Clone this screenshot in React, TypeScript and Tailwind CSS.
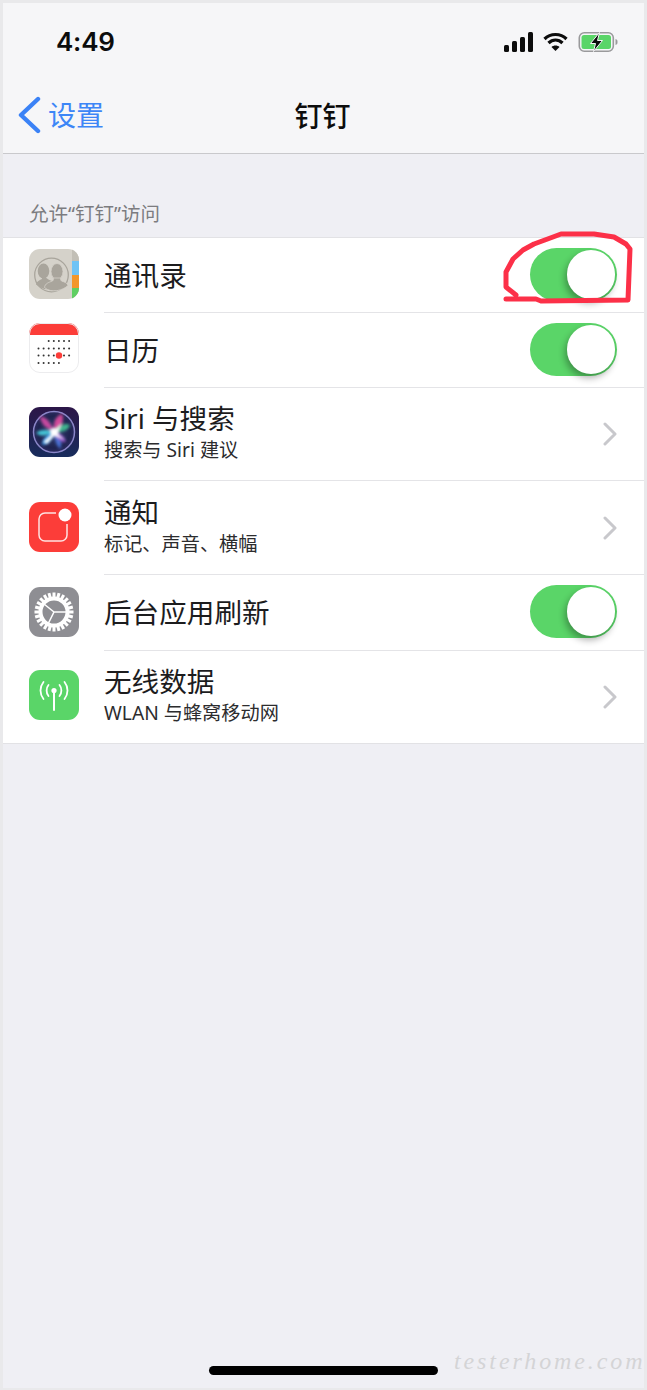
import { ReactNode } from 'react'

const cjk = { fontFamily: '"Noto Sans", "Noto Sans CJK SC", sans-serif' }

function Toggle() {
  return (
    <div className="relative w-[87px] h-[53px] mb-[2px] rounded-full bg-[#5ad568] shrink-0">
      <div className="absolute right-[2px] top-[2px] w-[48px] h-[49px] rounded-full bg-white shadow-[-2px_4px_7px_rgba(0,0,0,0.32)]" />
    </div>
  )
}

function Chevron() {
  return (
    <svg width="14" height="24" viewBox="0 0 14 24" fill="none" className="shrink-0">
      <path d="M2 2l10 10L2 22" stroke="#c8c8cc" strokeWidth="3" strokeLinecap="round" strokeLinejoin="round" />
    </svg>
  )
}

function ContactsIcon() {
  return (
    <svg width="50" height="50" viewBox="0 0 50 50">
      <defs>
        <clipPath id="c1"><rect width="50" height="50" rx="11" /></clipPath>
      </defs>
      <g clipPath="url(#c1)">
        <rect width="50" height="50" fill="#d5d2ca" />
        <rect x="43" width="7" height="50" fill="#c2bfb6" />
        <rect x="43" y="12" width="7" height="14" fill="#6fc3f5" />
        <rect x="43" y="26" width="7" height="13" fill="#f3962a" />
        <rect x="43" y="39" width="7" height="11" fill="#5fcf62" />
        <circle cx="22.500" cy="26" r="16.800" fill="none" stroke="#a9a59c" strokeWidth="1.300" />
        <ellipse cx="14.500" cy="22" rx="5.800" ry="7.500" fill="#a9a59c" />
        <path d="M7 35.500c.5-3 3-4 6-5.500 0-2 0-2 1-2h2c2 1 3 3 7 4l-3 8c-4 1-8-1-13-4.500z" fill="#a9a59c" />
        <ellipse cx="28" cy="22.500" rx="6" ry="8" fill="#a9a59c" stroke="#d5d2ca" strokeWidth="0.800" />
        <path d="M15.500 38.500c.5-4 4-5 8-6.500 1-1 1-2 1-3h7c0 1 0 2 1 3 3 1 6 2 6.500 4.500-5 5-17 8-23.500 2z" fill="#a9a59c" stroke="#d5d2ca" strokeWidth="0.800" />
      </g>
    </svg>
  )
}

function CalendarIcon() {
  const rows = [
    { y: 18, from: 3, to: 7 },
    { y: 25.5, from: 1, to: 7 },
    { y: 32.5, from: 1, to: 7 },
    { y: 40, from: 1, to: 5 },
  ]
  return (
    <svg width="50" height="50" viewBox="0 0 50 50">
      <defs>
        <clipPath id="c2"><rect width="50" height="50" rx="11" /></clipPath>
      </defs>
      <g clipPath="url(#c2)">
        <rect width="50" height="50" fill="#ffffff" />
        <rect width="50" height="12" fill="#fc3d39" />
        {rows.map((r) =>
          Array.from({ length: r.to - r.from + 1 }).map((_, i) => (
            <circle key={`${r.y}-${i}`} cx={9.5 + (r.from - 1 + i) * 5.1} cy={r.y} r="1" fill="#333" />
          )),
        )}
        <circle cx="30" cy="32.5" r="3.2" fill="#fc3d39" />
      </g>
      <rect x="0.5" y="0.5" width="49" height="49" rx="10.5" fill="none" stroke="#ececee" />
    </svg>
  )
}

function SiriIcon() {
  return (
    <svg width="50" height="50" viewBox="0 0 50 50">
      <defs>
        <clipPath id="c3"><rect width="50" height="50" rx="11" /></clipPath>
        <linearGradient id="sbg" x1="0" y1="0" x2="0" y2="1">
          <stop offset="0" stopColor="#2c1648" />
          <stop offset="1" stopColor="#182c5c" />
        </linearGradient>
        <radialGradient id="sglow">
          <stop offset="0" stopColor="#33406f" />
          <stop offset="0.8" stopColor="#1f2350" />
          <stop offset="1" stopColor="#2a2a5e" />
        </radialGradient>
        <filter id="sblur" x="-20%" y="-20%" width="140%" height="140%">
          <feGaussianBlur stdDeviation="1.500" />
        </filter>
      </defs>
      <g clipPath="url(#c3)">
        <rect width="50" height="50" fill="url(#sbg)" />
        <circle cx="25" cy="25" r="20" fill="url(#sglow)" />
        <circle cx="25" cy="25" r="20.5" fill="none" stroke="#8a86c8" strokeWidth="1.500" />
        <g filter="url(#sblur)">
          <path d="M25 24C21 14 16 9 11 10c1 7 6 12 14 14z" fill="#c5499f" />
          <path d="M25 24c-1-8 1-15 8-17 3 7-1 13-8 17z" fill="#d24a9a" />
          <path d="M25 24c7-7 12-8 16-6-2 6-8 8-16 6z" fill="#3fb58e" />
          <path d="M25 24C16 22 10 23 7 26c4 4 11 3 18-2z" fill="#45c8d8" />
          <path d="M25 24c-7 3-12 9-12 14 6 0 10-6 12-14z" fill="#2f8fe0" />
          <path d="M25 24c0 7 2 14 6 18 3-6 0-13-6-18z" fill="#4a72d8" />
          <path d="M25 24c6 2 11 6 12 11-6 1-10-4-12-11z" fill="#8a4cc0" />
        </g>
        <g filter="url(#sblur)">
          <path d="M14 35L25 25l8-10-4 12 7 6-11-4-7 8z" fill="#ffffff" />
          <circle cx="25" cy="25" r="4" fill="#ffffff" />
        </g>
      </g>
    </svg>
  )
}

function NotificationIcon() {
  return (
    <svg width="50" height="50" viewBox="0 0 50 50">
      <rect width="50" height="50" rx="11" fill="#fc3d39" />
      <path d="M27 11H16a6 6 0 0 0-6 6v16a6 6 0 0 0 6 6h16a6 6 0 0 0 6-6V22" fill="none" stroke="#fff" strokeOpacity="0.85" strokeWidth="1.500" />
      <circle cx="36" cy="13" r="6.500" fill="#fff" />
    </svg>
  )
}

function GearIcon() {
  const teeth = Array.from({ length: 24 })
  return (
    <svg width="50" height="50" viewBox="0 0 50 50">
      <rect width="50" height="50" rx="11" fill="#8e8e93" />
      {teeth.map((_, i) => (
        <rect key={i} x="23.500" y="5.500" width="3" height="6" fill="#fff" transform={`rotate(${i * 15} 25 25)`} />
      ))}
      <circle cx="25" cy="25" r="13.500" fill="none" stroke="#fff" strokeWidth="4" />
      <path d="M25 25L38 25M25 25L15 17M25 25L19 37" stroke="#fff" strokeWidth="1.600" />
    </svg>
  )
}

function CellularIcon() {
  return (
    <svg width="50" height="50" viewBox="0 0 50 50" fill="none">
      <rect width="50" height="50" rx="11" fill="#5ad568" />
      <g stroke="#fff" strokeWidth="1.800" strokeLinecap="round">
        <path d="M25 21v19" strokeWidth="2" />
        <path d="M19.500 15c-2.500 3-2.500 8 0 11" />
        <path d="M30.500 15c2.500 3 2.500 8 0 11" />
        <path d="M14.500 12c-4 5-4 12 0 17" />
        <path d="M35.500 12c4 5 4 12 0 17" />
      </g>
      <circle cx="25" cy="20.500" r="2.600" fill="#fff" />
    </svg>
  )
}

function Row(props: { icon: ReactNode; title: string; sub?: string; right: ReactNode; h: string; iconClass: string; last?: boolean }) {
  return (
    <div className={`flex items-center pl-[26px] ${props.h}`}>
      <div className={`w-[50px] h-[50px] shrink-0 ${props.iconClass}`}>{props.icon}</div>
      <div
        className={`ml-[25px] flex-1 self-stretch flex items-center justify-between pr-[27px] ${
          props.last ? '' : 'border-b border-[#e4e4e7]'
        }`}
      >
        <div className={props.sub ? 'pb-[6px]' : 'pb-[1px]'}>
          <div className="text-[27.600px] leading-[36px] text-[#1c1c1e]">{props.title}</div>
          {props.sub && <div className="mt-[2px] text-[19.200px] leading-[24px] text-[#2c2c2e]">{props.sub}</div>}
        </div>
        {props.right}
      </div>
    </div>
  )
}

export default function App() {
  return (
    <div className="w-[647px] h-[1390px] bg-[#e9e9eb] pt-[3px] px-[3px] pb-[2px]" style={cjk}>
      <div className="relative h-full bg-[#efeff4] flex flex-col overflow-hidden">
        <div className="h-[151px] bg-[#f6f6f8] border-b border-[#c9c9cc] flex flex-col shrink-0">
          <div className="flex items-center justify-between h-[78px] pl-[53px] pr-[25px]">
            <div className="text-[26px] font-semibold text-[#0c0c0c] -mt-[2px] tracking-[-0.2px]" style={{ fontFamily: 'Inter, sans-serif' }}>
              4:49
            </div>
            <div className="flex items-center gap-[9px]">
              <svg width="29" height="20" viewBox="0 0 29 20" fill="#0c0c0c">
                <rect x="0" y="13" width="5" height="7" rx="1.500" />
                <rect x="8" y="9" width="5" height="11" rx="1.500" />
                <rect x="16" y="5" width="5" height="15" rx="1.500" />
                <rect x="24" y="0" width="5" height="20" rx="1.500" />
              </svg>
              <svg width="27" height="20" viewBox="0 0 24 20" fill="none" stroke="#0c0c0c" strokeWidth="3.200">
                <path d="M1 7c6-6 16-6 22 0" />
                <path d="M5 11c4-4 10-4 14 0" />
                <path d="M12 19l-4-4c2-2 6-2 8 0z" fill="#0c0c0c" stroke="none" />
              </svg>
              <svg width="41" height="20" viewBox="0 0 40 20" fill="none">
                <rect x="0.800" y="0.800" width="34" height="18.400" rx="5" stroke="#9a9a9c" strokeWidth="1.600" />
                <rect x="3" y="3" width="29.500" height="14" rx="2.500" fill="#5ad568" />
                <path d="M37 7c1.600.5 2 1.200 2 3s-.4 2.500-2 3z" fill="#9a9a9c" />
                <path d="M21 0.500L12 11.500h5l-2 8 9-11h-5z" fill="#0c0c0c" stroke="#f6f6f8" strokeWidth="1" />
              </svg>
            </div>
          </div>
          <div className="relative flex items-center justify-center h-[72px]">
            <div className="absolute left-[14px] top-[15px] flex items-center">
              <svg width="24" height="38" viewBox="0 0 24 38" fill="none">
                <path d="M21 3L4 19l17 16" stroke="#3b82f6" strokeWidth="4.400" strokeLinecap="round" strokeLinejoin="round" />
              </svg>
              <span className="ml-[7px] text-[28px] leading-[38px] text-[#3d86f7]">设置</span>
            </div>
            <span className="text-[28px] font-medium text-[#0c0c0c] leading-[38px] -mt-[2px] -ml-[2px]">钉钉</span>
          </div>
        </div>

        <div className="pt-[47px] pl-[26px] h-[83px] text-[19.500px] leading-[26px] text-[#7c7c80] shrink-0">允许“钉钉”访问</div>

        <div className="bg-white border-y border-[#e2e2e5] shrink-0">
          <Row h="h-[75px]" iconClass="mb-[4px]" icon={<ContactsIcon />} title="通讯录" right={<Toggle />} />
          <Row h="h-[75px]" iconClass="mb-[6px]" icon={<CalendarIcon />} title="日历" right={<Toggle />} />
          <Row h="h-[93px]" iconClass="mb-[6px]" icon={<SiriIcon />} title="Siri 与搜索" sub="搜索与 Siri 建议" right={<Chevron />} />
          <Row h="h-[94px]" iconClass="mb-[2px]" icon={<NotificationIcon />} title="通知" sub="标记、声音、横幅" right={<Chevron />} />
          <Row h="h-[76px]" iconClass="mb-[2px]" icon={<GearIcon />} title="后台应用刷新" right={<Toggle />} />
          <Row h="h-[92px]" iconClass="mb-[5px]" icon={<CellularIcon />} title="无线数据" sub="WLAN 与蜂窝移动网" right={<Chevron />} last />
        </div>

        {/* red marker scribble round the first toggle */}
        <svg className="absolute left-[498px] top-[226px]" width="135" height="75" viewBox="0 0 135 75" fill="none">
          <path
            d="M5 70L35 70L40 72L127 71L129 20L125 15L113 8L93 5L60 5L52 8L33 15L22 21L12 30L5 43L5 58L15 66"
            stroke="#fc3048"
            strokeWidth="5"
            strokeLinecap="round"
            strokeLinejoin="round"
          />
        </svg>

        {/* home bar */}
        <div className="absolute left-[206px] top-[1363px] w-[229px] h-[9px] rounded-full bg-black" />

        {/* watermark */}
        <div
          className="absolute left-[451px] top-[1338px] text-[24px] italic font-light tracking-[2.900px] text-[#d4d4d6] leading-[40px]"
          style={{ fontFamily: '"Liberation Serif", serif' }}
        >
          testerhome.com
        </div>
      </div>
    </div>
  )
}
